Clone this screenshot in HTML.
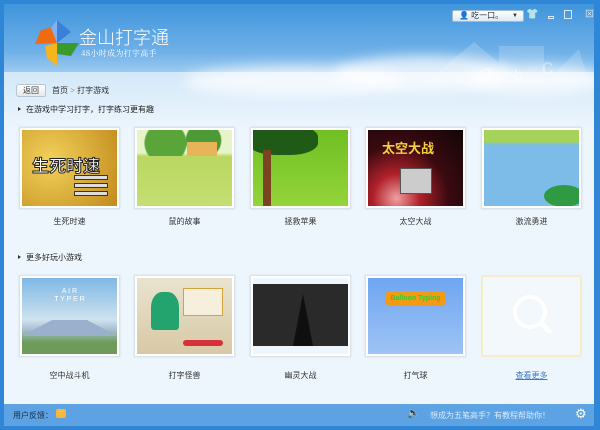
<!DOCTYPE html>
<html><head><meta charset="utf-8"><style>
*{margin:0;padding:0;box-sizing:border-box}
body{width:600px;height:430px;overflow:hidden;font-family:"Liberation Sans","Noto Sans CJK SC",sans-serif;font-size:9px;color:#333;background:#2f86d6;position:relative}
#win{position:absolute;left:4px;top:4px;width:590px;height:422px;background:#eef6fd;overflow:hidden}
#hdr{position:absolute;left:0;top:0;width:590px;height:68px;background:linear-gradient(#3f95dc,#6fb0e8 70%,#9ccaf0)}
#sky{position:absolute;left:0;top:68px;width:590px;height:60px;background:linear-gradient(#d3e8f9,#eef6fd)}
.cloud{position:absolute;background:#fff;border-radius:50%;opacity:.7;filter:blur(6px)}
#title{position:absolute;left:75px;top:20px;font-size:18px;color:#fff;font-weight:300}
#sub{position:absolute;left:77px;top:44px;font-size:8px;color:#fff;font-family:"Noto Serif CJK SC",serif;letter-spacing:0.3px}
.tb{position:absolute;top:6px;height:12px;background:linear-gradient(#fff,#dde9f4);border:1px solid #9dbad6;border-radius:2px;font-size:8px;color:#333;line-height:10px}
.bc{position:absolute;top:81px;font-size:8px;color:#333}
#back{position:absolute;left:12px;top:80px;width:30px;height:13px;background:linear-gradient(#fff,#e4e8ec);border:1px solid #b8c4cf;border-radius:3px 2px 2px 3px;font-size:8px;text-align:center;line-height:11px}
.sec{position:absolute;left:14px;font-size:8px;color:#222}
.sec:before{content:"";display:inline-block;width:0;height:0;border-left:3px solid #333;border-top:2px solid transparent;border-bottom:2px solid transparent;margin-right:5px;vertical-align:1px}
.fr{position:absolute;width:101px;height:82px;background:#fff;border:1px solid #dde3ea;padding:2px;box-shadow:0 0 2px #cdd8e3}
.fr .im{width:95px;height:76px;overflow:hidden;position:relative}
.lb{position:absolute;width:101px;text-align:center;font-size:8px;color:#333}
#ftr{position:absolute;left:0;top:400px;width:590px;height:22px;background:#5da3e3}
</style></head><body>
<div id="win">
<div id="hdr"></div>
<div id="sky"></div>
<div class="cloud" style="left:180px;top:62px;width:220px;height:30px"></div>
<div class="cloud" style="left:330px;top:52px;width:180px;height:36px"></div>
<div class="cloud" style="left:460px;top:62px;width:140px;height:28px"></div>
<svg style="position:absolute;left:400px;top:30px" width="190" height="50"><g fill="#fff" opacity=".18"><polygon points="20,50 70,8 120,50"/><rect x="95" y="12" width="45" height="38"/><polygon points="140,50 175,15 185,50"/></g><text x="75" y="48" font-size="26" fill="#fff" opacity=".5" font-family="Liberation Sans">a</text><text x="110" y="46" font-size="16" fill="#fff" opacity=".5" font-family="Liberation Sans">b</text><text x="138" y="40" font-size="22" fill="#fff" opacity=".4" font-family="Liberation Sans">c</text></svg>
<svg style="position:absolute;left:27px;top:14px" width="52" height="50"><polygon points="26,2 40,14 26,25" fill="#3b7fd8"/><polygon points="26,25 48,25 40,38 26,36" fill="#3a9a2c"/><polygon points="26,25 26,48 16,40 14,28" fill="#f5b51c"/><polygon points="26,25 4,26 10,12 26,8" fill="#f06a12"/><polygon points="26,2 26,25 20,10" fill="#7fb2ef"/></svg>
<div id="title">金山打字通</div>
<div id="sub">48小时成为打字高手</div>
<div class="tb" style="left:448px;width:72px;padding-left:6px">👤 吃一口。<span style="float:right;margin-right:5px;font-size:6px">▼</span></div>
<div style="position:absolute;left:522px;top:5px;color:#fff;font-size:10px">👕</div>
<div style="position:absolute;left:544px;top:12px;width:6px;height:3px;border:1px solid #d8e8f6"></div>
<div style="position:absolute;left:560px;top:6px;width:8px;height:9px;border:1px solid #d8e8f6"></div>
<div style="position:absolute;left:581px;top:3px;color:#e0eef9;font-size:9px">⊠</div>
<div id="back">返回</div>
<div class="bc" style="left:48px">首页 <span style="color:#999">&gt;</span> 打字游戏</div>
<div class="sec" style="top:100px">在游戏中学习打字，打字练习更有趣</div>

<div class="fr" style="left:15px;top:123px"><div class="im" style="background:radial-gradient(circle at 30% 40%,#f2d15a,#c18a1c)"><div style="position:absolute;left:10px;top:22px;font-size:17px;font-weight:bold;color:#fff;-webkit-text-stroke:1px #222">生死时速</div><div style="position:absolute;left:52px;top:45px;width:34px;height:5px;background:#ddd;border:1px solid #333"></div><div style="position:absolute;left:52px;top:53px;width:34px;height:5px;background:#ddd;border:1px solid #333"></div><div style="position:absolute;left:52px;top:61px;width:34px;height:5px;background:#ddd;border:1px solid #333"></div></div></div>
<div class="fr" style="left:130px;top:123px"><div class="im" style="background:linear-gradient(#e7f3c8 0,#e7f3c8 30%,#b9d761 35%,#c5de72)"><div style="position:absolute;left:0;top:0;width:95px;height:26px;background:radial-gradient(circle at 30% 50%,#5aa53a 30%,transparent 32%),radial-gradient(circle at 70% 40%,#4c9a36 25%,transparent 27%)"></div><div style="position:absolute;left:50px;top:12px;width:30px;height:14px;background:#e8b45a"></div></div></div>
<div class="fr" style="left:246px;top:123px"><div class="im" style="background:linear-gradient(#6fbf23,#93d53a)"><div style="position:absolute;left:-5px;top:-5px;width:70px;height:30px;background:#1f5a17;border-radius:40%"></div><div style="position:absolute;left:10px;top:20px;width:8px;height:56px;background:#7b4420"></div></div></div>
<div class="fr" style="left:361px;top:123px"><div class="im" style="background:radial-gradient(ellipse at 30% 90%,#f0a0a0,#b0202a 25%,#3a0a10 55%,#120608)"><div style="position:absolute;left:14px;top:8px;font-size:13px;font-weight:bold;color:#f5d040">太空大战</div><div style="position:absolute;left:32px;top:38px;width:32px;height:26px;background:#ccc;border:1px solid #555"></div></div></div>
<div class="fr" style="left:477px;top:123px"><div class="im" style="background:linear-gradient(#a5d35a 0,#a5d35a 15%,#7dbbe9 20%,#7dbbe9)"><div style="position:absolute;left:60px;top:55px;width:40px;height:22px;background:#2e9a44;border-radius:50%"></div></div></div>

<div class="lb" style="left:15px;top:212px">生死时速</div>
<div class="lb" style="left:130px;top:212px">鼠的故事</div>
<div class="lb" style="left:246px;top:212px">拯救苹果</div>
<div class="lb" style="left:361px;top:212px">太空大战</div>
<div class="lb" style="left:477px;top:212px">激流勇进</div>

<div class="sec" style="top:248px">更多好玩小游戏</div>

<div class="fr" style="left:15px;top:271px"><div class="im" style="background:linear-gradient(#7fb8e6,#cfe3ee 55%,#b0c6dd 65%,#6e9a5a 85%)"><div style="position:absolute;left:0;top:42px;width:95px;height:0;border-bottom:16px solid #9ab0cc;border-left:30px solid transparent;border-right:30px solid transparent"></div><div style="position:absolute;left:0;width:95px;top:10px;text-align:center;color:#fff;font-size:7px;line-height:8px">A I R<br>T Y P E R</div></div></div>
<div class="fr" style="left:130px;top:271px"><div class="im" style="background:linear-gradient(#e9e3cf,#d8c9a6)"><div style="position:absolute;left:14px;top:14px;width:28px;height:38px;background:#23a36d;border-radius:40% 40% 10% 10%"></div><div style="position:absolute;left:46px;top:10px;width:40px;height:28px;background:#f6efdc;border:1px solid #d6a23a"></div><div style="position:absolute;left:46px;top:62px;width:40px;height:6px;background:#d6303a;border-radius:3px"></div></div></div>
<div class="fr" style="left:246px;top:271px"><div class="im" style="background:#eef6fd"><div style="position:absolute;left:0;top:6px;width:95px;height:62px;background:#2a2a2a"><div style="position:absolute;left:40px;top:10px;width:20px;height:52px;background:#0f0f10;clip-path:polygon(50% 0,100% 100%,0 100%)"></div></div></div></div>
<div class="fr" style="left:361px;top:271px"><div class="im" style="background:linear-gradient(#6ea6f0,#9ec3f5)"><div style="position:absolute;left:17px;top:13px;width:61px;height:15px;background:#f49a14;border-radius:5px;color:#3c3;font-size:7px;font-weight:bold;text-align:center;line-height:15px">Balloon Typing</div></div></div>
<div class="fr" style="left:477px;top:271px;background:#f2f8fc;border:2px solid #f6edc8;box-shadow:none"><svg width="95" height="76"><circle cx="45" cy="33" r="15" fill="none" stroke="#fff" stroke-width="4"/><line x1="56" y1="44" x2="64" y2="52" stroke="#fff" stroke-width="5" stroke-linecap="round"/></svg></div>

<div class="lb" style="left:15px;top:366px">空中战斗机</div>
<div class="lb" style="left:130px;top:366px">打字怪兽</div>
<div class="lb" style="left:246px;top:366px">幽灵大战</div>
<div class="lb" style="left:361px;top:366px">打气球</div>
<div class="lb" style="left:477px;top:366px;color:#3a78c8;text-decoration:underline">查看更多</div>

<div id="ftr">
<div style="position:absolute;left:9px;top:6px;font-size:8px;color:#1a2d48">用户反馈：</div>
<div style="position:absolute;left:52px;top:5px;width:10px;height:9px;background:#f6b73c;border-radius:2px;color:#fff;font-size:6px;text-align:center;line-height:7px">···</div>
<div style="position:absolute;left:403px;top:4px;color:#fff;font-size:10px">🔈</div>
<div style="position:absolute;left:426px;top:6px;font-size:8px;color:#d8eafa">想成为五笔高手？有教程帮助你！</div>
<div style="position:absolute;left:571px;top:2px;color:#fff;font-size:13px">⚙</div>
</div>
</div>
</body></html>
